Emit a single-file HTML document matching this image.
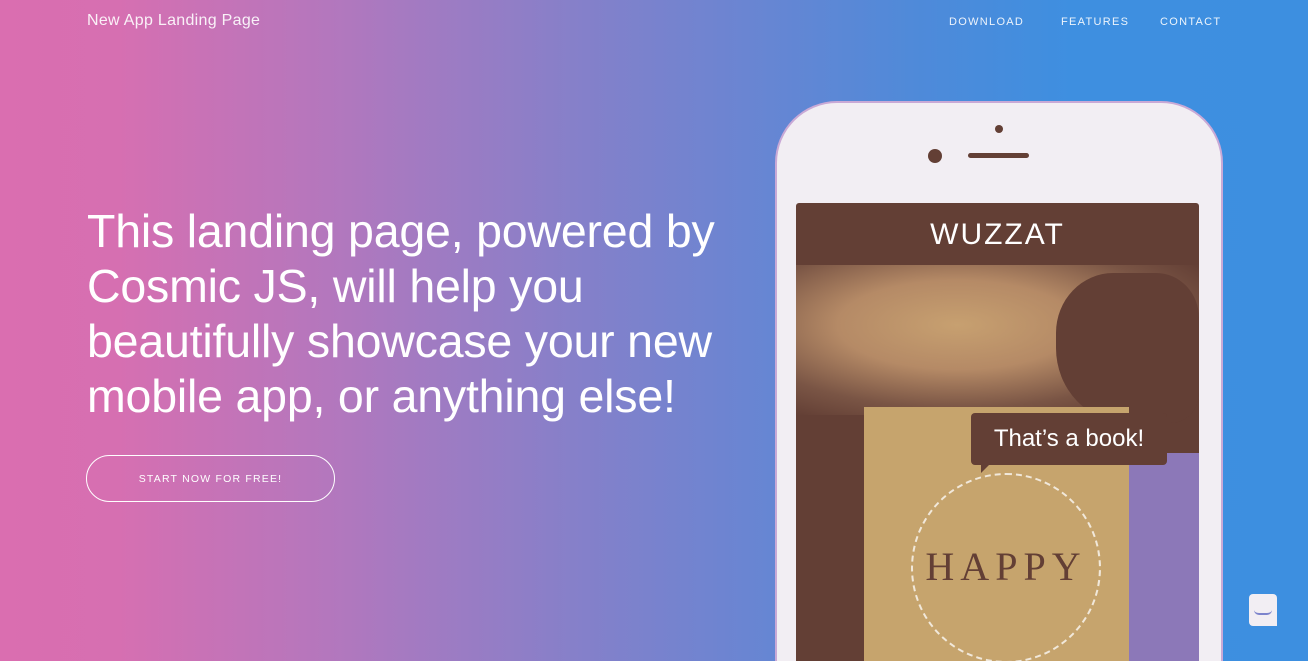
<!DOCTYPE html>
<html style="width:1308px;height:661px;overflow:hidden"><head><style>
*{margin:0;padding:0;box-sizing:border-box}
body{width:1308px;height:661px;overflow:hidden;position:relative;font-family:"Liberation Sans",sans-serif;color:#fff;
background:linear-gradient(90deg,#da6eb0 0%,#d66fb1 9%,#b477bd 25%,#8a7fc8 42%,#6a85d2 57%,#4f8ad9 70%,#3e8fe0 82%,#3d8fe0 100%)}
.brand{position:absolute;left:87px;top:12px;font-size:16px;font-weight:300;opacity:.9;letter-spacing:.3px}
.nav{position:absolute;top:16px;font-size:11px;letter-spacing:1.3px;opacity:.9}
h1{position:absolute;left:87px;top:204px;width:700px;font-size:46.5px;font-weight:normal;line-height:55px;letter-spacing:-0.2px}
.btn{position:absolute;left:86px;top:455px;width:249px;height:47px;border:1px solid #fff;border-radius:24px;font-size:10.5px;letter-spacing:1.2px;text-align:center;line-height:47px}
.phone{position:absolute;left:775px;top:101px;width:448px;height:560px;background:#f2eef3;border-radius:62px 62px 0 0;border:2px solid #c9a9d6;border-bottom:none}
.screen{position:absolute;left:796px;top:203px;width:403px;height:458px;background:#633f35;overflow:hidden;border-radius:3px 3px 0 0}
</style></head><body>
<div class="brand">New App Landing Page</div>
<div class="nav" style="left:949px">DOWNLOAD</div>
<div class="nav" style="left:1061px">FEATURES</div>
<div class="nav" style="left:1160px">CONTACT</div>
<h1>This landing page, powered by Cosmic JS, will help you beautifully showcase your new mobile app, or anything else!</h1>
<div class="btn">START NOW FOR FREE!</div>
<div class="phone"></div>
<div style="position:absolute;left:995px;top:125px;width:8px;height:8px;border-radius:50%;background:#633f35"></div>
<div style="position:absolute;left:928px;top:149px;width:14px;height:14px;border-radius:50%;background:#633f35"></div>
<div style="position:absolute;left:968px;top:153px;width:61px;height:5px;border-radius:3px;background:#633f35"></div>
<div class="screen">
 <div style="position:absolute;left:0;top:0;width:403px;height:62px;text-align:center;font-size:30px;letter-spacing:2px;line-height:64px;font-weight:300">WUZZAT</div>
 <div style="position:absolute;left:0;top:62px;width:403px;height:150px;background:radial-gradient(ellipse at 40% 40%,#c7a070 0%,#b58a66 35%,#7a5545 65%,#633f35 85%)"></div>
 <div style="position:absolute;left:260px;top:70px;width:143px;height:150px;background:#633f35;border-radius:40% 30% 20% 50%"></div>
 <div style="position:absolute;left:330px;top:250px;width:73px;height:208px;background:#8c78b8"></div>
 <div style="position:absolute;left:68px;top:204px;width:265px;height:254px;background:#c6a46d"></div>
 <div style="position:absolute;left:115px;top:270px;width:190px;height:190px;border-radius:50%;border:2px dashed rgba(255,255,255,.75)"></div>
 <div style="position:absolute;left:115px;top:340px;width:190px;text-align:center;font-family:'Liberation Serif',serif;font-size:40px;letter-spacing:6px;color:#633f35">HAPPY</div>
 <div style="position:absolute;left:175px;top:210px;width:196px;height:52px;background:#633f35;border-radius:4px;font-size:24px;line-height:52px;text-align:center">That’s a book!</div>
 <div style="position:absolute;left:185px;top:260px;width:0;height:0;border-left:10px solid #633f35;border-bottom:10px solid transparent"></div>
</div>
<div style="position:absolute;left:1249px;top:594px;width:28px;height:32px;background:#f2eef3;border-radius:4px 4px 0 4px"></div>
<div style="position:absolute;left:1254px;top:610px;width:18px;height:5px;border-bottom:2px solid #7d84cc;border-radius:0 0 9px 9px"></div>
</body></html>
